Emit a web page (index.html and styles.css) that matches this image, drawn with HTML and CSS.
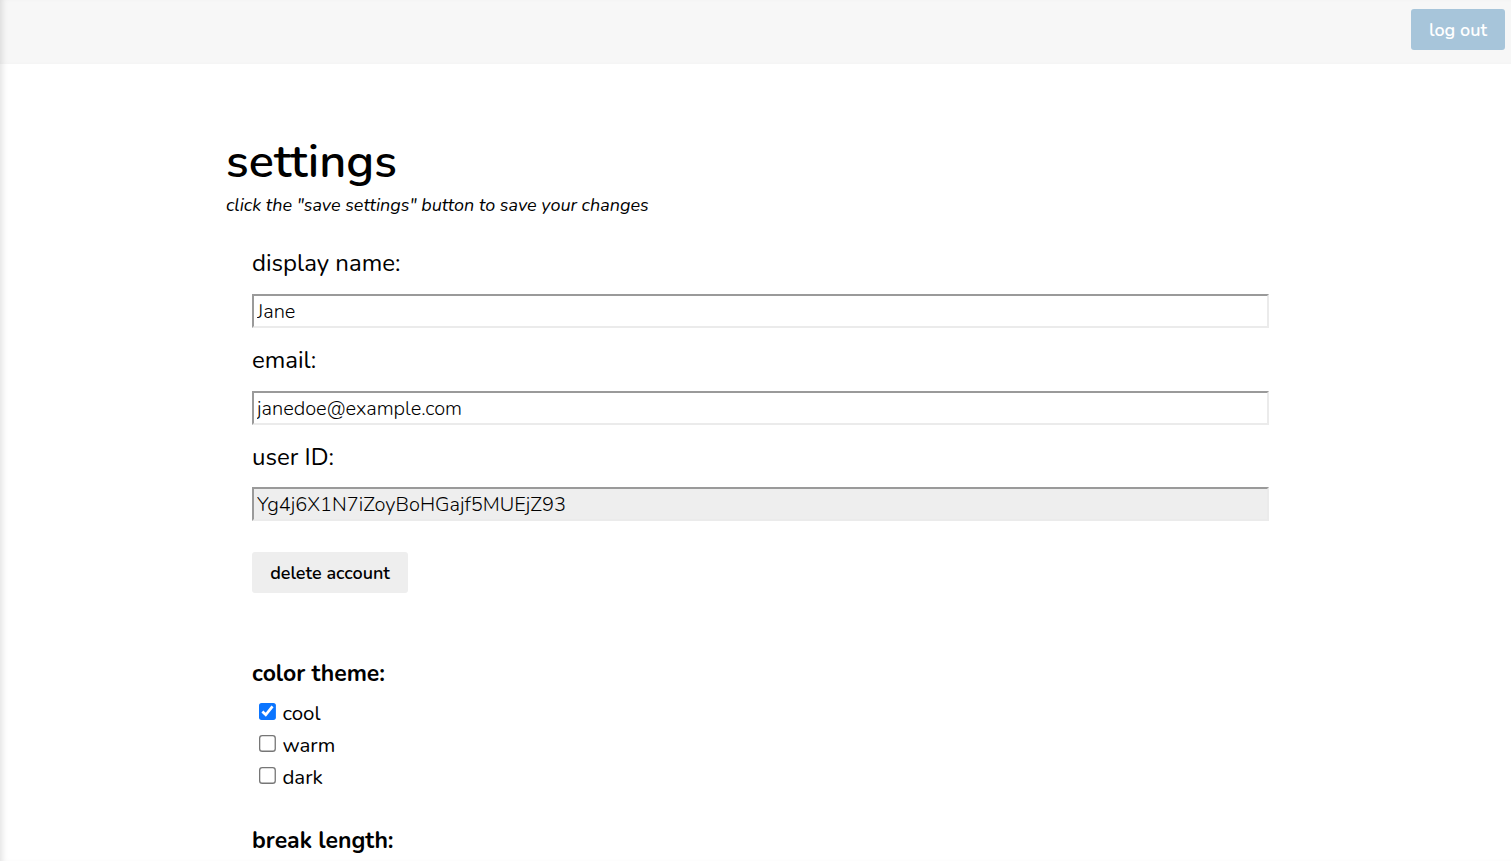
FILE: index.html
```html
<!DOCTYPE html>
<html>
<head>
<meta charset="utf-8">
<link rel="stylesheet" href="styles.css">
</head>
<body>
<div class="app">
  <header class="topbar">
    <button class="logout">log out</button>
  </header>
  <main class="content">
    <h1 class="title">settings</h1>
    <p class="subtitle">click the "save settings" button to save your changes</p>
    <section class="account">
      <label class="field-label">display name:</label>
      <input class="field" type="text" value="Jane">
      <label class="field-label">email:</label>
      <input class="field" type="text" value="janedoe@example.com">
      <label class="field-label">user ID:</label>
      <input class="field readonly" type="text" value="Yg4j6X1N7iZoyBoHGajf5MUEjZ93" readonly>
      <button class="delete">delete account</button>
    </section>
    <section class="theme">
      <h2 class="section-title">color theme:</h2>
      <div class="options">
        <label class="option"><input type="checkbox" checked><span>cool</span></label>
        <label class="option"><input type="checkbox"><span>warm</span></label>
        <label class="option"><input type="checkbox"><span>dark</span></label>
      </div>
      <h2 class="section-title break">break length:</h2>
    </section>
  </main>
</div>
</body>
</html>
```
FILE: styles.css
```css
* { box-sizing: border-box; }
html, body { margin: 0; padding: 0; }
body {
  font-family: "Nunito", "Lato", "Noto Sans", sans-serif;
  color: #000;
  background: #fff;
  overflow: hidden;
}
.app {
  min-height: 861px;
  box-shadow: inset 6px 0 6px -4px rgba(0,0,0,0.12);
}
.topbar {
  height: 64px;
  background: #f7f7f7;
  display: flex;
  justify-content: flex-end;
  align-items: flex-start;
  padding: 9px 6px 0 0;
  box-shadow: inset 6px 0 6px -4px rgba(0,0,0,0.12);
}
.logout {
  width: 94px;
  height: 41px;
  border: none;
  border-radius: 3px;
  background: #a7c5da;
  color: #fff;
  font-family: inherit;
  font-size: 18px;
  font-weight: 600;
  padding: 0;
}
.content {
  padding: 70px 0 0 226px;
}
.title {
  margin: 0;
  font-size: 47px;
  font-weight: 600;
  line-height: 56px;
}
.subtitle {
  margin: 2px 0 0;
  font-style: italic;
  font-size: 18px;
  line-height: 26px;
}
.account {
  margin-left: 26px;
  width: 1017px;
  display: flex;
  flex-direction: column;
  align-items: flex-start;
  padding-top: 29px;
}
.field-label {
  font-size: 24px;
  line-height: 32px;
  margin-bottom: 15px;
}
.field {
  width: 1017px;
  height: 34px;
  border-width: 2px;
  border-style: solid;
  border-color: #9a9a9a #ebebeb #ebebeb #9a9a9a;
  font-family: inherit;
  font-size: 20px;
  font-weight: 300;
  padding: 0 3px;
  margin: 0 0 16px;
  color: #000;
  background: #fff;
  outline: none;
}
.field.readonly {
  background: #eeeeee;
  margin: -1px 0 15px;
}
.delete {
  margin-top: 16px;
  width: 156px;
  height: 41px;
  border: none;
  border-radius: 3px;
  background: #eeeeee;
  font-family: inherit;
  font-size: 18px;
  font-weight: 600;
  color: #000;
  padding: 0;
}
.theme {
  margin-left: 26px;
  padding-top: 66px;
}
.section-title {
  margin: 0;
  font-size: 23px;
  font-weight: 700;
  line-height: 30px;
}
.options {
  display: flex;
  flex-direction: column;
  padding: 8px 0 0 7px;
}
.option {
  display: flex;
  align-items: center;
  height: 32px;
  font-size: 20.5px;
}
.option input {
  zoom: 1.3;
  margin: 0 5px 2px 0;
  width: 13px;
  height: 13px;
  accent-color: #0b75ff;
}
.section-title.break { margin-top: 33px; }
```
